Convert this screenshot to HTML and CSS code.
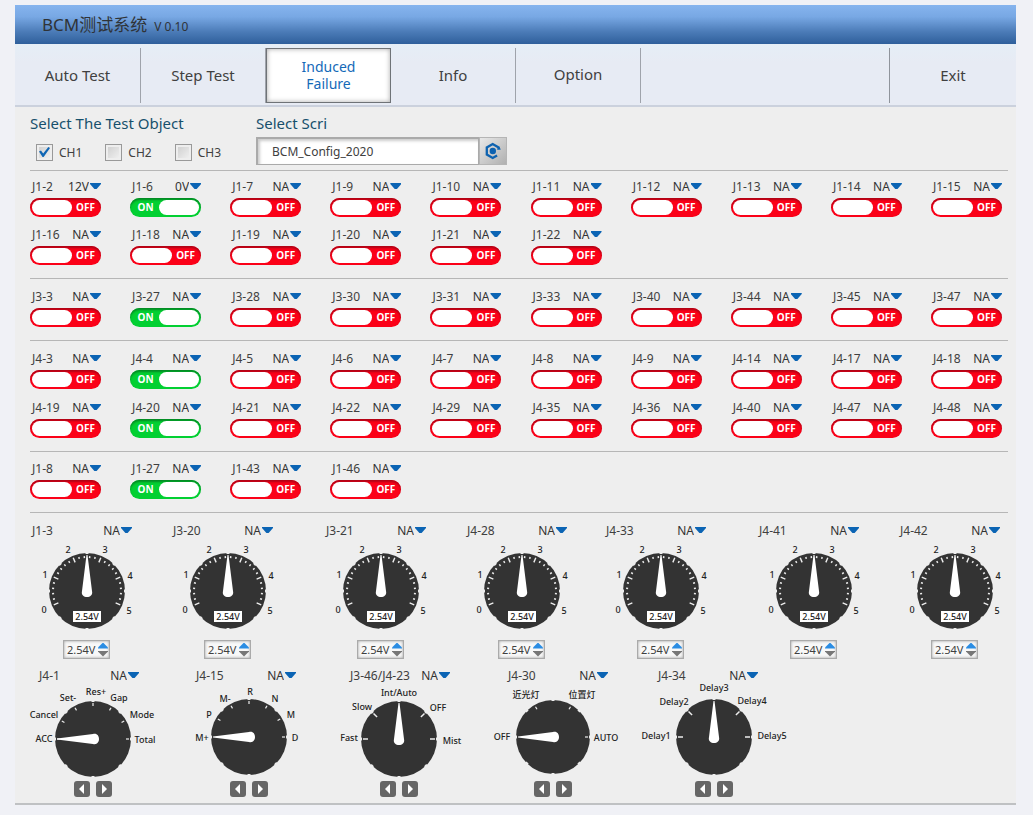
FILE: index.html
```html
<!DOCTYPE html>
<html lang="en">
<head>
<meta charset="utf-8">
<title>BCM测试系统</title>
<link rel="stylesheet" href="styles.css">
</head>
<body>
<div class="app">
  <header class="titlebar">
    <h1 class="title">BCM测试系统</h1>
    <span class="version">V 0.10</span>
  </header>
  <nav class="tabs">
    <button class="tab" type="button">Auto Test</button>
    <button class="tab" type="button">Step Test</button>
    <button class="tab tab-active" type="button" aria-current="page">Induced<br>Failure</button>
    <button class="tab" type="button">Info</button>
    <button class="tab tab-option" type="button">Option</button>
    <button class="tab tab-exit" type="button">Exit</button>
  </nav>
  <main class="content">
    <div class="setup">
      <fieldset class="objects">
        <legend class="heading">Select The Test Object</legend>
        <div class="channels">
          <label class="channel"><input class="tick" type="checkbox" checked>CH1</label>
          <label class="channel"><input class="tick" type="checkbox">CH2</label>
          <label class="channel"><input class="tick" type="checkbox">CH3</label>
        </div>
      </fieldset>
      <div class="script">
        <label class="heading" for="script">Select Scri</label>
        <div class="picker">
          <input class="picker-field" id="script" type="text" value="BCM_Config_2020">
          <button class="picker-button" type="button" aria-label="Reload script">
            <svg width="18" height="18" viewBox="0 0 18 18"><path d="M14.600 7.500V5.400L8.700 2 2.800 5.400v7.200L8.700 16l4.400-2.500" fill="none" stroke="#0d62b0" stroke-width="2.300"/><path d="M13 7.600h4L15 4.800z" fill="#0d62b0"/><circle cx="8.800" cy="9" r="3.200" fill="#0d62b0"/></svg>
          </button>
        </div>
      </div>
    </div>
    <div id="banks"></div>
    <section class="gauges" id="gauges"></section>
    <section class="selectors" id="selectors"></section>
  </main>
</div>
<script src="app.js"></script>
</body>
</html>
```
FILE: styles.css
```css
* { box-sizing: border-box; }
body {
  margin: 0;
  padding: 5px 17px 9px 15px;
  background: #f0f1f6;
  color: #404040;
  font: 12px/18px "Noto Sans", "Noto Sans CJK SC", sans-serif;
}
button, input, select { font: inherit; color: inherit; margin: 0; padding: 0; }
button { cursor: pointer; }
.app { background: #eee; border-bottom: 2px solid #bfc1c3; }

.titlebar {
  display: flex;
  align-items: baseline;
  gap: 7px;
  height: 39px;
  padding: 8px 27px 6px;
  background: linear-gradient(#86b4ee 0%, #78a8e4 30%, #4c7cb8 68%, #2e5f9b 100%);
  color: #2f3337;
}
.title { margin: 0; font-size: 17px; line-height: 24px; font-weight: 400; }
.version { font-size: 12px; }

.tabs {
  display: flex;
  height: 63px;
  padding: 4px 0 2px;
  background: linear-gradient(#e5eef6, #e7ebf4 30%);
  border-bottom: 2px solid #cbd1dd;
}
.tab {
  flex: 0 0 125px;
  border: 0;
  border-right: 1px solid #9fa3ab;
  background: none;
  font-size: 15px;
  line-height: 17px;
}
.tab:first-child { flex-basis: 126px; }
.tab-active {
  padding-bottom: 2px;
  border: 1px solid #6f7377;
  background: #fff;
  color: #1469b8;
  font-size: 14px;
  box-shadow: inset 0 0 5px #aaa;
}
.tab-option { padding-bottom: 3px; }
.tab-exit { flex-basis: 127px; margin-left: auto; border-right: 0; border-left: 1px solid #8f949c; }

.content { padding: 7px 8px 6px 15px; }
.setup { display: flex; height: 56px; }
.objects { flex: 0 0 226px; border: 0; margin: 0; padding: 0; }
.heading { display: block; padding: 0; color: #17506c; font-size: 15px; line-height: 18px; }
.channels { display: flex; gap: 23px; padding: 12px 6px 0; }
.channel { display: flex; align-items: center; gap: 6px; height: 17px; }
.tick {
  appearance: none;
  width: 17px;
  height: 17px;
  border: 1px solid #999;
  background: linear-gradient(135deg, #ccc, #f4f4f4);
  box-shadow: inset 0 0 0 2px #eee;
}
.tick:checked::before {
  content: "";
  display: block;
  width: 11px;
  height: 10px;
  margin: 2px;
  background: #0f66b4;
  clip-path: polygon(0 45%, 18% 35%, 38% 65%, 85% 0, 100% 10%, 42% 100%, 32% 100%);
}
.picker { display: flex; width: 251px; margin-top: 5px; }
.picker-field {
  flex: 1;
  min-width: 0;
  height: 28px;
  padding: 0 14px;
  border: 2px solid #aaa;
  border-width: 2px 1px 1px 2px;
  background: #fff;
  box-shadow: inset 2px 2px 3px #ccc;
}
.picker-button {
  display: grid;
  place-items: center;
  width: 28px;
  height: 28px;
  border: 1px solid #b5b5b5;
  background: linear-gradient(135deg, #e8e8e8, #b0b0b0);
}

.bank {
  display: grid;
  grid-template-columns: repeat(10, 71px);
  justify-content: space-between;
  row-gap: 10px;
  padding: 8px 6px 13px 0;
  border-top: 1px solid #b6b6b6;
}
.bank-snug { padding-top: 7px; row-gap: 9px; }
.bank-roomy { padding-top: 9px; }
.pin-head { display: flex; justify-content: space-between; height: 18px; }
.pin-name { padding-left: 2px; white-space: nowrap; }
.mode { display: flex; align-items: center; gap: 1px; color: #333; }
.mode::after {
  content: "";
  width: 11px;
  height: 6px;
  margin-bottom: 2px;
  background: #0b64b4;
  clip-path: polygon(0 0, 100% 0, 100% 17%, 60% 100%, 40% 100%, 0 17%);
}
.mode-select {
  appearance: none;
  width: 26px;
  height: 18px;
  border: 0;
  background: none;
  text-align-last: right;
}
.switch {
  position: relative;
  display: flex;
  align-items: center;
  width: 71px;
  height: 19px;
  margin-top: 2px;
  padding: 2px;
  border-radius: 10px;
  background: #fb0118;
  box-shadow: inset 0 2px 2px #b00416;
  color: #fff;
  font-size: 10px;
  font-weight: 700;
}
.switch-input { position: absolute; inset: 0; width: 100%; height: 100%; opacity: 0; }
.switch-knob { width: 40px; height: 15px; border-radius: 8px; background: #fff; }
.switch-text { flex: 1; text-align: center; line-height: 15px; }
.switch-on { flex-direction: row-reverse; background: #02d032; box-shadow: inset 0 2px 2px #048a24; }

.gauges {
  display: grid;
  grid-template-columns: 141fr 153fr 141fr 139fr 153fr 141fr 110fr;
  padding-top: 9px;
  border-top: 1px solid #b6b6b6;
}
.gauge-head { width: 102px; }
.drawing { display: block; overflow: visible; font-size: 9px; font-weight: 500; fill: #222; }
.spinner {
  display: flex;
  width: 47px;
  height: 19px;
  margin: 8px 0 0 33px;
  border: 1px solid #aaa;
  background: #f8f8f8;
  box-shadow: inset 0 0 3px #999;
}
.spinner-field { width: 34px; padding-left: 3px; border: 0; background: none; font-size: 11px; }
.spinner-buttons { display: grid; gap: 2px; align-content: center; }
.step { width: 10px; height: 6px; border: 0; background: #2b8de3; clip-path: polygon(50% 0, 100% 85%, 100% 100%, 0 100%, 0 85%); }
.step-down { background: #777; clip-path: polygon(0 0, 100% 0, 100% 15%, 50% 100%, 0 15%); }

.selectors {
  display: grid;
  grid-template-columns: 157fr 154fr 158fr 150fr 359fr;
  padding-top: 8px;
}
.selector-head { width: 109px; padding-left: 7px; }
.turners { display: flex; gap: 6px; justify-content: center; }
.turner { display: grid; place-items: center; width: 16px; height: 16px; border: 0; border-radius: 3px; background: #666; }
```
FILE: app.js
```js
const OFF = false, ON = true;
const banks = [
  { style: "bank-snug", on: ["J1-6"], pins: "J1-2 J1-6 J1-7 J1-9 J1-10 J1-11 J1-12 J1-13 J1-14 J1-15 J1-16 J1-18 J1-19 J1-20 J1-21 J1-22" },
  { style: "bank-roomy", on: ["J3-27"], pins: "J3-3 J3-27 J3-28 J3-30 J3-31 J3-33 J3-40 J3-44 J3-45 J3-47" },
  { style: "bank-roomy", on: ["J4-4", "J4-20"], pins: "J4-3 J4-4 J4-5 J4-6 J4-7 J4-8 J4-9 J4-14 J4-17 J4-18 J4-19 J4-20 J4-21 J4-22 J4-29 J4-35 J4-36 J4-40 J4-47 J4-48" },
  { style: "", on: ["J1-27"], pins: "J1-8 J1-27 J1-43 J1-46" }
];
const modes = { "J1-2": "12V", "J1-6": "0V" };
const gauges = ["J1-3", "J3-20", "J3-21", "J4-28", "J4-33", "J4-41", "J4-42"];

/* Labels are [text, x, baseline y] in the drawing's own coordinates. */
const selectors = [
  { name: "J4-1", cx: 63, cy: 55, r: 38, needle: -90, ticks: [-90, -60, -30, 0, 30, 60, 90], len: 3,
    labels: [["ACC", 14, 58], ["Cancel", 14, 34], ["Set-", 38, 17], ["Res+", 66, 11], ["Gap", 89, 17], ["Mode", 112, 34], ["Total", 115, 59]] },
  { name: "J4-15", cx: 62, cy: 53, r: 38, needle: -90, ticks: [-60, -30, 0, 30, 60, 90], len: 3,
    labels: [["M+", 15, 57], ["P", 22, 34], ["M-", 38, 18], ["R", 63, 11], ["N", 88, 18], ["M", 104, 34], ["D", 108, 57]] },
  { name: "J3-46/J4-23", cx: 58, cy: 55, r: 38, needle: 0, ticks: [-90, -45, 45, 90], len: 5,
    labels: [["Fast", 8, 57], ["Slow", 21, 26], ["Int/Auto", 58, 12], ["OFF", 97, 27], ["Mist", 111, 60]] },
  { name: "J4-30", cx: 54, cy: 53, r: 37, needle: -90, ticks: [-30, 30, 90], len: 3,
    labels: [["OFF", 3, 56], ["近光灯", 27, 14], ["位置灯", 83, 14], ["AUTO", 107, 57]] },
  { name: "J4-34", cx: 65, cy: 53, r: 38, needle: 0, ticks: [-90, -45, 45, 90], len: 5,
    labels: [["Delay1", 7, 55], ["Delay2", 25, 21], ["Delay3", 65, 7], ["Delay4", 103, 20], ["Delay5", 123, 55]] }
];

const mode = name => `<span class="mode"><select class="mode-select" aria-label="${name} mode"><option>${modes[name] || "NA"}</option></select></span>`;
const head = (name, cls = "") => `<div class="pin-head ${cls}"><span class="pin-name">${name}</span>${mode(name)}</div>`;

function pin(name, state) {
  return `<div>${head(name)}
    <label class="switch ${state ? "switch-on" : ""}"><input class="switch-input" type="checkbox" role="switch" aria-label="${name}" ${state ? "checked" : ""}>
    <span class="switch-knob"></span><span class="switch-text">${state ? "ON" : "OFF"}</span></label></div>`;
}

const line = (angle, from, to, width, color) =>
  `<line y1="${-from}" y2="${-to}" transform="rotate(${angle})" stroke="${color}" stroke-width="${width}"/>`;

function disc(r) {
  const notches = [0, 45, 90, 135, 180, 225, 270, 315].map(a => line(a, r - 1, r + 1, 3, "#eee"));
  return `<circle r="${r}" fill="#333"/>${notches.join("")}`;
}
const needle = (angle, r) =>
  `<path transform="rotate(${angle})" d="M-.5 ${2 - r}h1L5 0C6 4 3 6 0 6S-6 4 -5 0z" fill="#fff"/>`;
const label = ([text, x, y]) => `<text x="${x}" y="${y}" text-anchor="middle">${text}</text>`;

function gauge(name) {
  let ticks = "";
  for (let i = 0; i <= 25; i++) {
    const major = i % 5 === 0;
    ticks += line(i * 9 - 112.5, major ? 31 : 33, major ? 36 : 35, major ? 1.4 : 1.5, "#eee");
  }
  const numbers = [["0", 14, 73], ["1", 15, 38], ["2", 38, 13], ["3", 75, 13], ["4", 100, 39], ["5", 99, 74]];
  return `<div>${head(name, "gauge-head")}
    <svg class="drawing" width="110" height="92" viewBox="0 0 110 92">
      <g transform="translate(57 51)">${disc(38)}${ticks}${needle(0, 38)}<rect x="-14" y="20" width="28" height="11" fill="#fff"/></g>
      ${numbers.map(label).join("")}${label(["2.54V", 57, 80])}
    </svg>
    <div class="spinner"><input class="spinner-field" type="text" value="2.54V" aria-label="${name} voltage">
    <span class="spinner-buttons"><button class="step" type="button" aria-label="Increase"></button><button class="step step-down" type="button" aria-label="Decrease"></button></span></div></div>`;
}

function selector(s) {
  const ticks = s.ticks.map(a => line(a, s.r - 2 - s.len, s.r - 2, s.len > 3 ? 1.5 : 1.2, "#eee")).join("");
  const arrow = d => `<svg width="8" height="10" viewBox="0 0 8 10"><path d="${d}" fill="#fff"/></svg>`;
  return `<div>${head(s.name, "selector-head")}
    <svg class="drawing" width="126" height="96" viewBox="0 1 126 96">
      <g transform="translate(${s.cx} ${s.cy})">${disc(s.r)}${ticks}${needle(s.needle, s.r)}</g>
      ${s.labels.map(label).join("")}
    </svg>
    <div class="turners" style="width:${s.cx * 2}px"><button class="turner" type="button" aria-label="${s.name} previous">${arrow("M6 0v10L1 5z")}</button><button class="turner" type="button" aria-label="${s.name} next">${arrow("M2 0v10l5-5z")}</button></div></div>`;
}

document.getElementById("banks").innerHTML = banks.map(b =>
  `<section class="bank ${b.style}">${b.pins.split(" ").map(n => pin(n, b.on.includes(n) ? ON : OFF)).join("")}</section>`).join("");
document.getElementById("gauges").innerHTML = gauges.map(gauge).join("");
document.getElementById("selectors").innerHTML = selectors.map(selector).join("");
```
